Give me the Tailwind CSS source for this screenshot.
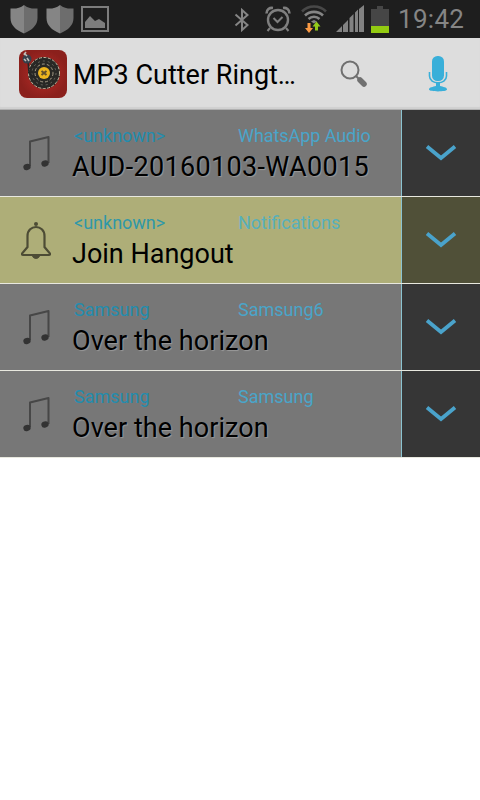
<!DOCTYPE html>
<html lang="en">
<head>
    <meta charset="UTF-8">
    <meta name="viewport" content="width=device-width, initial-scale=1.0">
    <title>MP3 Cutter Ringtone Maker</title>
    <script src="https://cdn.jsdelivr.net/npm/@tailwindcss/browser@4"></script>
</head>
<body class="bg-white w-[480px] h-[800px] overflow-hidden font-[Roboto,'Noto_Sans',sans-serif]">
    <svg class="hidden">
        <symbol id="shield" viewBox="0 0 28 30">
            <path d="M14 1C10 4 6 5 .5 4.500V14c0 7 5 12 13.500 15.500z" fill="#858585"/>
            <path d="M14 1c4 3 8 4 13.500 3.500V14c0 7-5 12-13.500 15.500z" fill="#6d6d6d"/>
        </symbol>
        <symbol id="note" viewBox="0 0 30 38">
            <path d="M8 32V7.500l18.500-4.500V29" fill="none" stroke="#474747" stroke-width="2" stroke-linejoin="round"/>
            <ellipse cx="5" cy="33" rx="3.700" ry="3" fill="#333" transform="rotate(-15 5 33)"/>
            <ellipse cx="23" cy="29.500" rx="3.700" ry="3" fill="#333" transform="rotate(-15 23 29.500)"/>
        </symbol>
        <symbol id="chevron" viewBox="0 0 32 18">
            <path d="M2 2.500l14 11.500 14-11.500" fill="none" stroke="#4aa3cb" stroke-width="3.800"/>
        </symbol>
    </svg>

    <!-- status bar -->
    <div class="flex items-center h-[38px] bg-[#1e1e1e] pl-[10px] pr-4">
        <svg class="w-7 h-[30px]"><use href="#shield"/></svg>
        <svg class="w-7 h-[30px] ml-2"><use href="#shield"/></svg>
        <svg class="w-7 h-[26px] ml-[7px]" viewBox="0 0 28 26">
            <rect x="1" y="1" width="26" height="24" fill="none" stroke="#7d7d7d" stroke-width="2"/>
            <path d="M4 22v-6l5-6 5 5 4-2 6 4v5z" fill="#7d7d7d"/>
        </svg>
        <svg class="w-4 h-6 ml-auto mt-0.5" viewBox="0 0 16 24" fill="none" stroke="#858585" stroke-width="2">
            <path d="M1.500 6.500l12 10.500L8 22V2l5.500 5-12 10.500"/>
        </svg>
        <svg class="w-[26px] h-[26px] ml-[15px]" viewBox="0 0 26 26" fill="none" stroke="#7f7f7f">
            <circle cx="13" cy="14" r="10" stroke-width="2.400"/>
            <path d="M8.500 12l4 4 5-5M5 22l-2.500 3M21 22l2.500 3" stroke-width="2"/>
            <path d="M1.500 7.500C1.500 3.500 4.500 1.500 8 2M24.500 7.500c0-4-3-6-6.500-5.500" stroke-width="2.600"/>
        </svg>
        <svg class="w-[26px] h-[28px] ml-[10px]" viewBox="0 0 26 28" fill="none" stroke-width="2.600">
            <path d="M1 6.500a17 17 0 0 1 24 0" stroke="#484848"/>
            <path d="M4 10.500a13 13 0 0 1 18 0M7.500 14a8 8 0 0 1 11 0" stroke="#858585"/>
            <path d="M10 16.500l3-1.500 3 1.500-3 2z" fill="#858585"/>
            <path d="M6.500 18h3v5H12l-4 5-4-5h2.500z" fill="#fa9a45"/>
            <path d="M14 25.500h3v-4h2.500l-4-5-4 5H14z" fill="#93cb1a"/>
        </svg>
        <svg class="w-7 h-7 ml-[9px]" viewBox="0 0 28 28" fill="#828282">
            <path d="M0 27l6-6v6zM7 27v-7l5-5v12zM13.500 27V13l4-4v18zM19 27V7.500l3-3V27zM23 27V4l5-4v27z"/>
        </svg>
        <svg class="w-[18px] h-[27px] ml-[7px]" viewBox="0 0 18 27">
            <path d="M0 3h6V0h6v3h6v17H0z" fill="#464646"/>
            <path d="M0 20h18v7H0z" fill="#93cb12"/>
        </svg>
        <div class="w-[66px] ml-[9px] text-[26px] leading-[38px] text-[#858585] whitespace-nowrap tracking-[0.300px]">19:42</div>
    </div>

    <!-- action bar -->
    <div class="flex items-center h-[72px] bg-[#dddddd] border-b border-b-[#b0b0b0] pt-px pl-[19px] shadow-[inset_0_-2px_1px_#d0d0d0]">
        <svg class="w-12 h-12 shrink-0" viewBox="0 0 48 48">
            <defs>
                <radialGradient id="red"><stop offset=".5" stop-color="#a32622"/><stop offset="1" stop-color="#8b201c"/></radialGradient>
            </defs>
            <rect width="48" height="48" rx="8" fill="url(#red)"/>
            <circle cx="25" cy="23" r="16" fill="#282825"/>
            <g fill="none" stroke="#c5b9a0">
                <circle cx="25" cy="23" r="15.500" stroke-dasharray="3 1.500"/>
                <circle cx="25" cy="23" r="12" stroke-width=".8" stroke-dasharray="2 3" stroke="#77756b"/>
                <circle cx="25" cy="23" r="9" stroke-width=".8" stroke-dasharray="3 2"/>
            </g>
            <circle cx="25" cy="23" r="6" fill="#edb51f"/>
            <path d="M22.500 21l5 4m0-4l-5 4" stroke="#63502b" stroke-width="2"/>
            <path d="M9 11l1 12 8 7" fill="none" stroke="#252525" stroke-width="1.500"/>
            <circle cx="8" cy="9" r="4.500" fill="#36404c"/>
            <path d="M5 3l3 3M8 8l2 3M5 9l2 2M7 2L5 5" stroke="#c1bdb8" stroke-width="1.500"/>
        </svg>
        <div class="w-[250px] ml-[6px] pt-0.5 text-[27px] leading-9 text-black whitespace-nowrap">MP3 Cutter Ringt…</div>
        <svg class="w-7 h-7 ml-[17px]" viewBox="0 0 28 28" fill="none" stroke="#707070">
            <circle cx="10" cy="10" r="8.500" stroke-width="2"/>
            <path d="M16 16l4 4" stroke-width="2"/>
            <path d="M20 20l4 4" stroke-width="5.500" stroke-linecap="round"/>
        </svg>
        <svg class="w-5 h-9 ml-[60px]" viewBox="0 0 20 36" fill="#39afd9">
            <rect x="4" y="0" width="12" height="25" rx="5.500"/>
            <path d="M1.500 16v4c0 9 17 9 17 0v-4" fill="none" stroke="#39afd9" stroke-width="1.600"/>
            <path d="M8 26h4v4c3 1 7 1 7 3.500 0 2.500-18 2.500-18 0C1 31 5 31 8 30z"/>
        </svg>
    </div>

    <!-- song list -->
    <div class="flex h-[87px] bg-[#777777] border-b border-[#e8e8df]">
        <div class="flex w-[401px]">
            <svg class="w-[30px] h-[38px] ml-[22px] mt-[24px]"><use href="#note"/></svg>
            <div class="ml-[20px] pt-[14px]">
                <div class="flex text-[18px] leading-6">
                    <span class="w-[166px] pl-0.5 text-[#238cad]">&lt;unknown&gt;</span>
                    <span class="text-[#4aa5c9] whitespace-nowrap tracking-[-0.070px]">WhatsApp Audio</span>
                </div>
                <div class="pt-px text-[27px] leading-9 tracking-[0.340px] text-black whitespace-nowrap [text-shadow:1px_1px_1px_#999]">AUD-20160103-WA0015</div>
            </div>
        </div>
        <div class="flex justify-center w-[79px] bg-[#363636] border-l border-[#8bc3d0]">
            <svg class="w-8 h-[18px] mt-[34px]"><use href="#chevron"/></svg>
        </div>
    </div>
    <div class="flex h-[87px] bg-[#aeae78] border-b border-[#e8e8df]">
        <div class="flex w-[401px]">
            <svg class="w-[30px] h-[40px] ml-[21px] mt-[23px]" viewBox="0 0 30 40" fill="none" stroke="#4d4c35" stroke-width="2.200">
                <path d="M6.500 27V16c0-12 17-12 17 0v11l5.500 6.500c.5 1-.3 1.500-1 1.500H2c-.8 0-1.500-.5-1-1.500z"/>
                <path d="M11.500 36.500c1.500 2.500 5.500 2.500 7 0z" fill="#4d4c35" stroke-width="1"/>
                <circle cx="15" cy="4" r="2" fill="#4d4c35" stroke="none"/>
            </svg>
            <div class="ml-[21px] pt-[14px]">
                <div class="flex text-[18px] leading-6">
                    <span class="w-[166px] pl-0.5 text-[#2f98a8]">&lt;unknown&gt;</span>
                    <span class="text-[#57b0bb] whitespace-nowrap">Notifications</span>
                </div>
                <div class="pt-px text-[27px] leading-9 text-black whitespace-nowrap">Join Hangout</div>
            </div>
        </div>
        <div class="flex justify-center w-[79px] bg-[#505038] border-l border-[#8bc3d0]">
            <svg class="w-8 h-[18px] mt-[34px]"><use href="#chevron"/></svg>
        </div>
    </div>
    <div class="flex h-[87px] bg-[#777777] border-b border-[#e8e8df]">
        <div class="flex w-[401px]">
            <svg class="w-[30px] h-[38px] ml-[22px] mt-[24px]"><use href="#note"/></svg>
            <div class="ml-[20px] pt-[14px]">
                <div class="flex text-[18px] leading-6">
                    <span class="w-[166px] pl-0.5 text-[#238cad]">Samsung</span>
                    <span class="text-[#4aa5c9] whitespace-nowrap">Samsung6</span>
                </div>
                <div class="pt-px text-[27px] leading-9 tracking-[0.050px] text-black whitespace-nowrap [text-shadow:1px_1px_1px_#999]">Over the horizon</div>
            </div>
        </div>
        <div class="flex justify-center w-[79px] bg-[#363636] border-l border-[#8bc3d0]">
            <svg class="w-8 h-[18px] mt-[34px]"><use href="#chevron"/></svg>
        </div>
    </div>
    <div class="flex h-[87px] bg-[#777777] border-b border-[#e8e8df]">
        <div class="flex w-[401px]">
            <svg class="w-[30px] h-[38px] ml-[22px] mt-[24px]"><use href="#note"/></svg>
            <div class="ml-[20px] pt-[14px]">
                <div class="flex text-[18px] leading-6">
                    <span class="w-[166px] pl-0.5 text-[#238cad]">Samsung</span>
                    <span class="text-[#4aa5c9] whitespace-nowrap">Samsung</span>
                </div>
                <div class="pt-px text-[27px] leading-9 tracking-[0.050px] text-black whitespace-nowrap [text-shadow:1px_1px_1px_#999]">Over the horizon</div>
            </div>
        </div>
        <div class="flex justify-center w-[79px] bg-[#363636] border-l border-[#8bc3d0]">
            <svg class="w-8 h-[18px] mt-[34px]"><use href="#chevron"/></svg>
        </div>
    </div>
</body>
</html>
